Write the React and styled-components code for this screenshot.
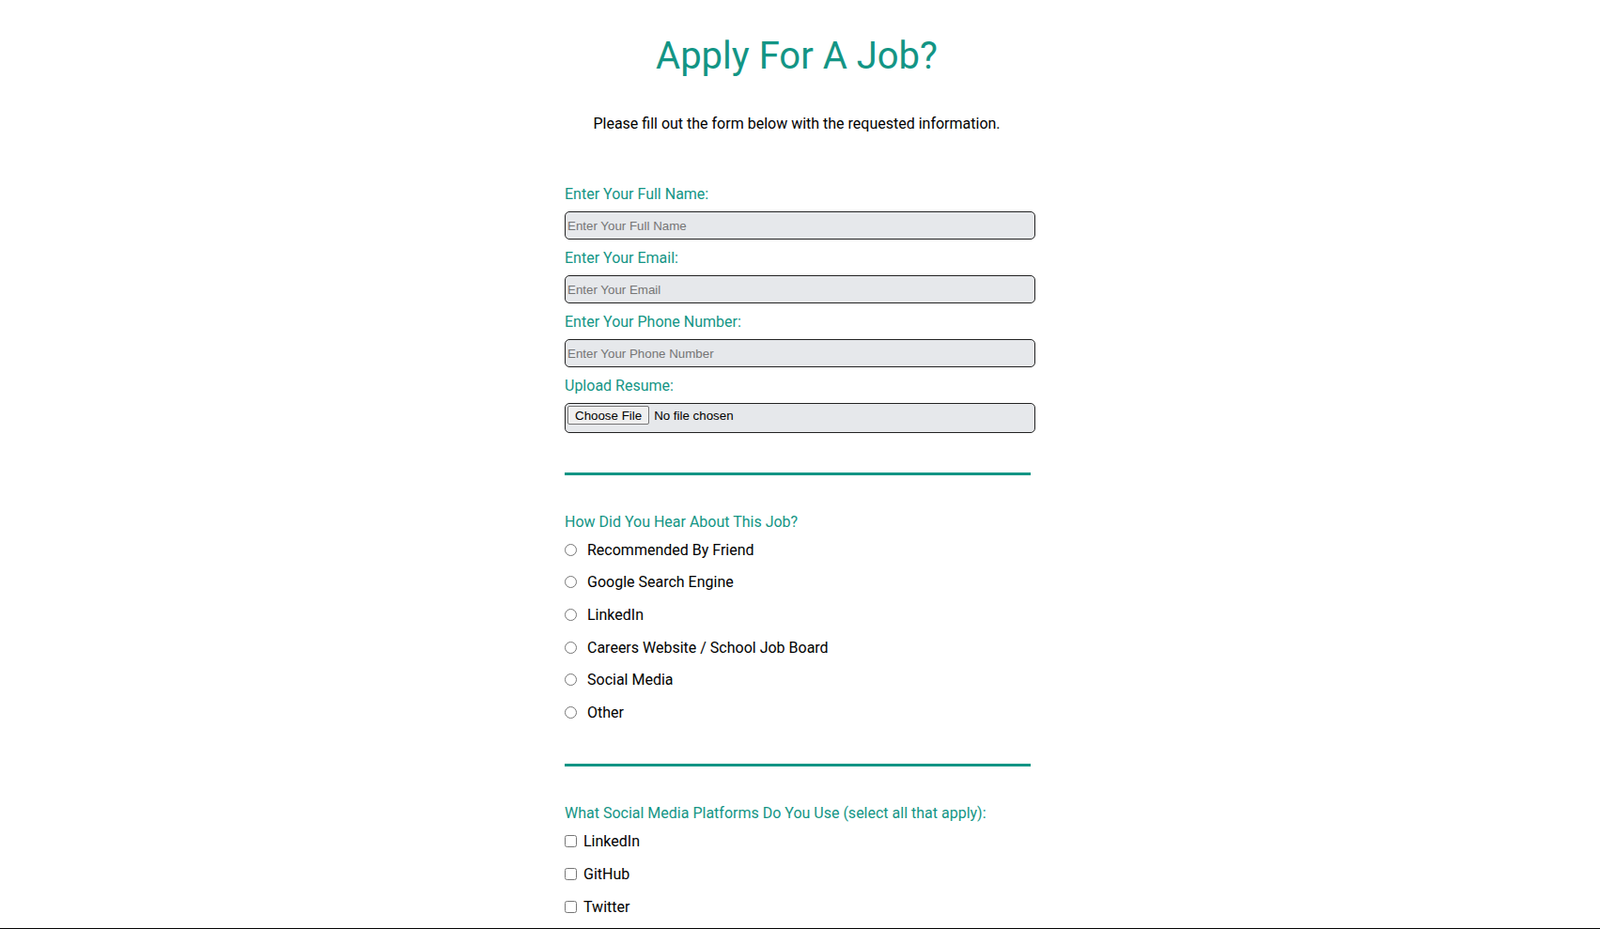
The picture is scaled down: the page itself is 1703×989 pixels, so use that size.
import React from "react";
import styled, { createGlobalStyle } from "styled-components";

const teal = "#139585";

const GlobalStyle = createGlobalStyle`
  body {
    margin: 0;
    background: #ffffff;
    font-family: Roboto, "Liberation Sans", Arial, sans-serif;
    color: #000000;
  }
`;

const sources = [
  "Recommended By Friend",
  "Google Search Engine",
  "LinkedIn",
  "Careers Website / School Job Board",
  "Social Media",
  "Other",
];

const platforms = ["LinkedIn", "GitHub", "Twitter"];

const fields = [
  { id: "name", label: "Enter Your Full Name:", placeholder: "Enter Your Full Name", type: "text" },
  { id: "email", label: "Enter Your Email:", placeholder: "Enter Your Email", type: "email" },
  { id: "phone", label: "Enter Your Phone Number:", placeholder: "Enter Your Phone Number", type: "tel" },
];

const App = () => {
  return (
    <>
      <GlobalStyle />
      <Page>
        <Header>
          <Title>Apply For A Job?</Title>
          <Intro>Please fill out the form below with the requested information.</Intro>
        </Header>
        <Form onSubmit={(e) => e.preventDefault()}>
          {fields.map((f) => (
            <Field key={f.id}>
              <Label htmlFor={f.id}>{f.label}</Label>
              <Input id={f.id} type={f.type} placeholder={f.placeholder} />
            </Field>
          ))}
          <Field>
            <Label htmlFor="resume">Upload Resume:</Label>
            <FileInput id="resume" type="file" />
          </Field>

          <Rule />

          <Question>How Did You Hear About This Job?</Question>
          <Options>
            {sources.map((s) => (
              <Option key={s}>
                <Radio type="radio" name="source" value={s} />
                {s}
              </Option>
            ))}
          </Options>

          <Rule $spaced />

          <Question>What Social Media Platforms Do You Use (select all that apply):</Question>
          <Options $shift>
            {platforms.map((p) => (
              <Option key={p}>
                <Check type="checkbox" value={p} />
                {p}
              </Option>
            ))}
          </Options>
        </Form>
      </Page>
      <Footer />
    </>
  );
};

export default App;

const Page = styled.div`
  display: flex;
  flex-direction: column;
  align-items: center;
`;

const Header = styled.header`
  text-align: center;
  padding-right: 7px;
`;

const Title = styled.h1`
  margin: 36px 0 0;
  font-size: 40px;
  font-weight: 400;
  line-height: normal;
  color: ${teal};
`;

const Intro = styled.p`
  margin: 39px 0 0;
  font-size: 16px;
  line-height: normal;
`;

const Form = styled.form`
  width: 501px;
  margin-top: 56px;
  display: flex;
  flex-direction: column;
`;

const Field = styled.div`
  display: flex;
  flex-direction: column;
  margin-bottom: 10px;
`;

const Label = styled.label`
  font-size: 16px;
  line-height: 19px;
  color: ${teal};
  margin-bottom: 9px;
`;

const Input = styled.input`
  box-sizing: border-box;
  height: 30px;
  width: 100%;
  margin: 0;
  padding: 0 2px;
  border: 1px solid #222222;
  border-radius: 5px;
  background: #e6e8eb;
  font-family: "Liberation Sans", Arial, sans-serif;
  font-size: 13.33px;
  color: #000;
  outline: none;

  &::placeholder {
    color: #757575;
  }
`;

const FileInput = styled.input`
  box-sizing: border-box;
  height: 32px;
  width: 100%;
  margin: 0;
  padding: 2px;
  border: 1px solid #222222;
  border-radius: 5px;
  background: #e6e8eb;
  font-family: "Liberation Sans", Arial, sans-serif;
  font-size: 13.33px;
  color: #000;

  &::file-selector-button {
    height: 20px;
    margin: 0 5px 0 0;
    padding: 0 7px;
    border: 1px solid #767676;
    border-radius: 2px;
    background: #efefef;
    font-family: "Liberation Sans", Arial, sans-serif;
    font-size: 13.33px;
    color: #000;
  }
`;

const Rule = styled.hr`
  width: 496px;
  height: 3px;
  margin: ${(p) => (p.$spaced ? "37px" : "32px")} 0 40px;
  border: none;
  background: ${teal};
  align-self: flex-start;
`;

const Question = styled.h3`
  margin: 0 0 3px;
  font-size: 16px;
  font-weight: 400;
  line-height: normal;
  color: ${teal};
`;

const Options = styled.div`
  display: flex;
  flex-direction: column;
  margin-top: ${(p) => (p.$shift ? "1px" : "0")};
`;

const Option = styled.label`
  display: flex;
  align-items: center;
  height: 34.6px;
  font-size: 16px;
  color: #000;
`;

const Radio = styled.input`
  width: 13px;
  height: 13px;
  margin: 0 11px 0 0;
`;

const Check = styled.input`
  width: 13px;
  height: 13px;
  margin: 0 7px 0 0;
`;

const Footer = styled.footer`
  margin-top: 6px;
  height: 120px;
  background: #050505;
`;
